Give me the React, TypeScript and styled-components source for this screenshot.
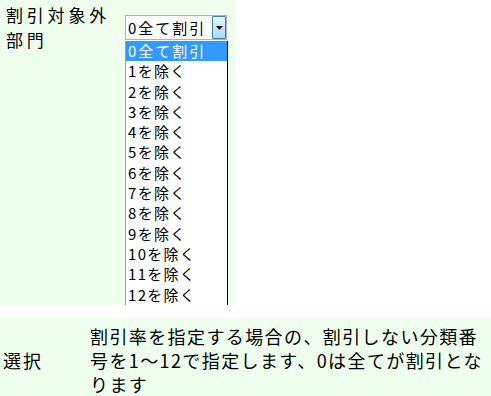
import React from "react";
import styled, { createGlobalStyle } from "styled-components";

const Global = createGlobalStyle`
  html, body { margin: 0; padding: 0; background: #ffffff; }
  body { font-family: "Noto Sans CJK JP", "Noto Sans", sans-serif; color: #000; }
`;

const Page = styled.div`
  width: 491px;
  height: 396px;
  overflow: hidden;
  display: flex;
  flex-direction: column;
`;

const TopRow = styled.div`
  width: 235px;
  height: 305px;
  background: #eeffee;
  display: flex;
  align-items: flex-start;
`;

const Label = styled.div`
  width: 112px;
  padding: 2px 0 0 6px;
  font-size: 17px;
  letter-spacing: 3.8px;
  line-height: 25px;
`;

const SelectWrap = styled.div`
  position: relative;
  margin-top: 15px;
  margin-left: 7px;
`;

const SelectBox = styled.div`
  width: 100px;
  height: 23px;
  border: 1px solid #aab3bd;
  background: #fff;
  display: flex;
  align-items: stretch;
`;

const SelectText = styled.div`
  flex: 1;
  padding-left: 2px;
  font-size: 15px;
  letter-spacing: 2px;
  line-height: 23px;
  white-space: nowrap;
`;

const Arrow = styled.div`
  width: 12px;
  border: 1px solid #3c7fb1;
  border-radius: 1px;
  background: linear-gradient(#eaf6fd, #a7d9f5);
  display: flex;
  align-items: center;
  justify-content: center;
`;

const List = styled.div`
  position: absolute;
  top: 26px;
  left: 0;
  width: 101px;
  border-left: 1px solid #a0a0a0;
  border-right: 1px solid #000;
  background: #fff;
  height: 264px;
`;

const Item = styled.div<{ $active?: boolean }>`
  height: 20.3px;
  line-height: 20px;
  padding-left: 2px;
  font-size: 15px;
  letter-spacing: ${(p) => (p.$active ? "2px" : "1.3px")};
  white-space: nowrap;
  background: ${(p) => (p.$active ? "#3399ff" : "transparent")};
  color: ${(p) => (p.$active ? "#fff" : "#000")};
`;

const BottomRow = styled.div`
  margin-top: 13px;
  background: #eeffee;
  display: grid;
  grid-template-columns: 90px 1fr;
  align-items: center;
  flex: 1;
`;

const RowLabel = styled.div`
  padding: 5px 0 0 3px;
  font-size: 18px;
  letter-spacing: 2px;
  line-height: 24px;
`;

const Desc = styled.div`
  padding-top: 6px;
  font-size: 18px;
  letter-spacing: 1.4px;
  line-height: 24px;
  align-self: start;
`;

const options = [
  "0全て割引",
  ...Array.from({ length: 12 }, (_, i) => `${i + 1}を除く`),
];

export default function App() {
  return (
    <>
      <Global />
      <Page>
        <TopRow>
          <Label>割引対象外部門</Label>
          <SelectWrap>
            <SelectBox>
              <SelectText>0全て割引</SelectText>
              <Arrow>
                <svg width="7" height="4" viewBox="0 0 7 4">
                  <path d="M0 0h7L3.5 4z" fill="#000" />
                </svg>
              </Arrow>
            </SelectBox>
            <List>
              {options.map((o, i) => (
                <Item key={o} $active={i === 0}>
                  {o}
                </Item>
              ))}
            </List>
          </SelectWrap>
        </TopRow>
        <BottomRow>
          <RowLabel>選択</RowLabel>
          <Desc>
            割引率を指定する場合の、割引しない分類番号を1〜12で指定します、0は全てが割引となります
          </Desc>
        </BottomRow>
      </Page>
    </>
  );
}
